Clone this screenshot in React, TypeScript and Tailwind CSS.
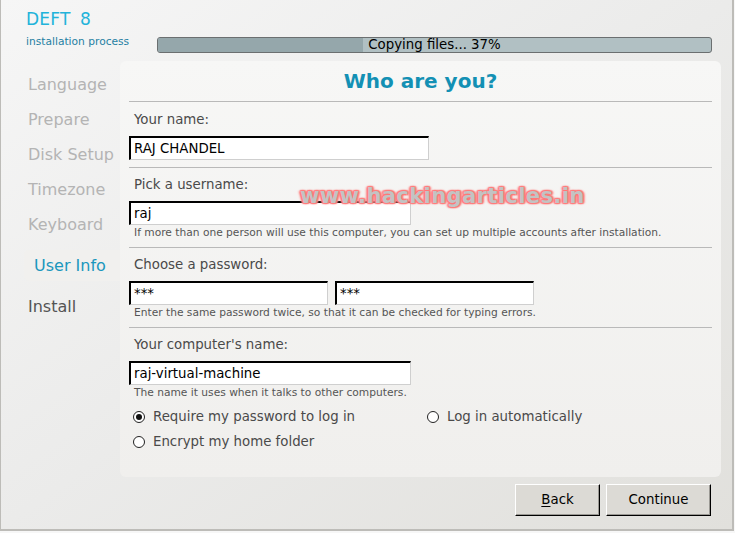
import React from 'react'

const steps = ['Language', 'Prepare', 'Disk Setup', 'Timezone', 'Keyboard']

function TextBox({ value, className }: { value: string; className: string }) {
  return (
    <div
      className={`h-[24px] bg-white border-t-2 border-l-2 border-r border-b border-t-black border-l-black border-r-[#cfcfcf] border-b-[#cfcfcf] pl-[3px] flex items-center text-[13.33px] text-black ${className}`}
    >
      {value}
    </div>
  )
}

function Radio({ checked, label }: { checked?: boolean; label: string }) {
  return (
    <div className="flex items-center h-[16px]">
      <span className="w-[12px] h-[12px] rounded-full border border-[#222] bg-white flex items-center justify-center ml-[4px]">
        {checked && <span className="w-[6px] h-[6px] rounded-full bg-[#111]" />}
      </span>
      <span className="ml-[8px] text-[13.33px] text-[#4a4a4a]">{label}</span>
    </div>
  )
}

function Label({ children }: { children: React.ReactNode }) {
  return <div className="pl-[5px] text-[13.33px] leading-[16px] text-[#4a4a4a]">{children}</div>
}

function Help({ children }: { children: React.ReactNode }) {
  return <div className="pl-[5px] text-[10.67px] leading-[16px] text-[#555]">{children}</div>
}

export default function App() {
  return (
    <div className="w-[735px] h-[533px] bg-[#f7f7f7] font-['DejaVu_Sans',sans-serif]">
      <div className="w-[734px] h-[531px] border-l border-r-2 border-b-2 border-[#bdbcb8] bg-gradient-to-br from-[#f6f6f6] via-[#ebebea] to-[#e1e0dc] flex flex-col">
        {/* header */}
        <div className="flex pl-[25px] pt-[8px] h-[61px]">
          <div className="w-[131px]">
            <div className="text-[17px] leading-[22px] text-[#22b3da] tracking-[0.2px]">
              DEFT <span className="ml-[4px]">8</span>
            </div>
            <div className="text-[10.67px] leading-[14px] mt-[5px] text-[#1f7fa3]">installation process</div>
          </div>
          <div className="relative mt-[29px] w-[555px] h-[16px] rounded-[3px] border border-[#6b6f70] bg-[#b1c0c3] overflow-hidden">
            <div className="h-full w-[37%] bg-[#95a7ab]" />
            <div className="absolute inset-0 flex items-center justify-center text-[13.33px] text-black">
              Copying files... 37%
            </div>
          </div>
        </div>

        {/* body */}
        <div className="flex h-[416px]">
          <div className="w-[119px] pt-[6px]">
            {steps.map((s) => (
              <div key={s} className="h-[35px] flex items-center pl-[27px] text-[16px] text-[#b4b4b4]">
                {s}
              </div>
            ))}
            <div className="mt-[8px] ml-[23px] h-[31px] rounded-l-[5px] bg-[#f1f0ee] flex items-center pl-[10px] text-[16px] text-[#1b97bd]">
              User Info
            </div>
            <div className="mt-[8px] h-[35px] flex items-center pl-[27px] text-[16px] text-[#545454]">Install</div>
          </div>

          <div className="w-[601px] rounded-[6px] bg-gradient-to-b from-[#f7f7f6] to-[#f0efed] px-[9px] relative">
            <div className="h-[41px] flex items-center justify-center border-b border-[#b9b9b9]">
              <span className="text-[20px] font-bold text-[#1390b4]">Who are you?</span>
            </div>

            <div className="pt-[10px] pb-[7px] border-b border-[#b9b9b9]">
              <Label>Your name:</Label>
              <TextBox value="RAJ CHANDEL" className="mt-[8px] w-[300px]" />
            </div>

            <div className="pt-[9px] pb-[6px] border-b border-[#b9b9b9]">
              <Label>Pick a username:</Label>
              <TextBox value="raj" className="mt-[8px] w-[282px]" />
              <Help>
                If more than one person will use this computer, you can set up multiple accounts after installation.
              </Help>
            </div>

            <div className="pt-[9px] pb-[6px] border-b border-[#b9b9b9]">
              <Label>Choose a password:</Label>
              <div className="mt-[8px] flex gap-[7px]">
                <TextBox value="***" className="w-[199px]" />
                <TextBox value="***" className="w-[199px]" />
              </div>
              <Help>Enter the same password twice, so that it can be checked for typing errors.</Help>
            </div>

            <div className="pt-[9px]">
              <Label>Your computer's name:</Label>
              <TextBox value="raj-virtual-machine" className="mt-[8px] w-[282px]" />
              <Help>The name it uses when it talks to other computers.</Help>
              <div className="mt-[8px] flex">
                <div className="w-[294px]">
                  <Radio checked label="Require my password to log in" />
                </div>
                <Radio label="Log in automatically" />
              </div>
              <div className="mt-[9px]">
                <Radio label="Encrypt my home folder" />
              </div>
            </div>

            <div className="absolute left-[180px] top-[120px] text-[21px] font-bold text-[#c3c3c3] tracking-[0.4px] [text-shadow:0_0_3px_#ff7070,1px_1px_1px_#ff8080,-1px_-1px_1px_#ff8080,1px_-1px_1px_#ff8080,-1px_1px_1px_#ff8080,2px_0_2px_#ff9090,-2px_0_2px_#ff9090]">
              www.hackingarticles.in
            </div>
          </div>
        </div>

        {/* buttons */}
        <div className="flex justify-end gap-[6px] pr-[21px] pt-[7px]">
          <button className="w-[85px] h-[32px] bg-[#dcdad5] border border-t-white border-l-white border-r-black border-b-black shadow-[inset_-1px_-1px_0_#9a9893] text-[13.33px] text-black">
            <span className="underline underline-offset-2">B</span>ack
          </button>
          <button className="w-[105px] h-[32px] bg-[#dcdad5] border border-t-white border-l-white border-r-black border-b-black shadow-[inset_-1px_-1px_0_#9a9893] text-[13.33px] text-black">
            Continue
          </button>
        </div>
      </div>
    </div>
  )
}
